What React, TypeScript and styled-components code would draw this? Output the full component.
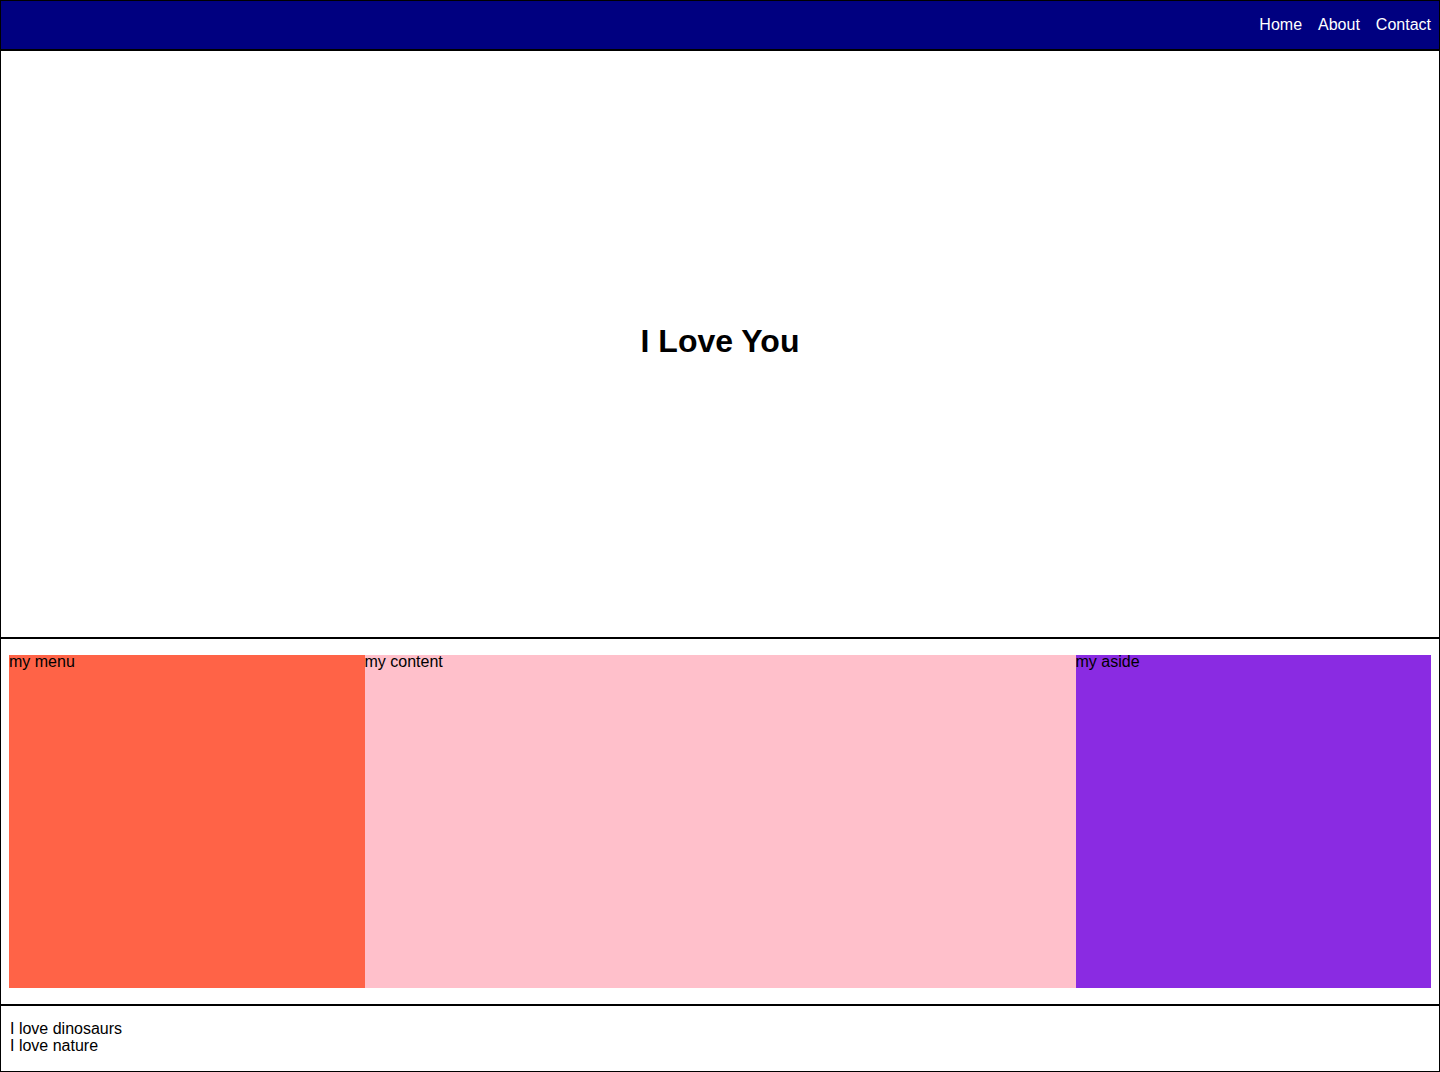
import React from "react";
import styled, { createGlobalStyle } from "styled-components";

const Global = createGlobalStyle`
  html, body {
    margin: 0;
    padding: 0;
    background: #ffffff;
  }
  body {
    font-family: "Liberation Sans", Arial, Helvetica, sans-serif;
    font-size: 16px;
    color: #000000;
  }
  * { box-sizing: border-box; }
`;

const Page = styled.div`
  width: 1440px;
  height: 1072px;
  display: grid;
  grid-template-rows: 50px 588px 367px 1fr;
`;

const Header = styled.header`
  background: #000080;
  border: 1px solid #000000;
  display: flex;
  align-items: center;
  justify-content: flex-end;
  padding: 0 8px 0 0;
`;

const Nav = styled.nav`
  display: flex;
  gap: 16px;
`;

const NavLink = styled.a`
  color: #ffffff;
  text-decoration: none;
  font-size: 16px;
  line-height: 18px;
`;

const Hero = styled.section`
  border: 1px solid #000000;
  display: flex;
  align-items: center;
  justify-content: center;
  padding-bottom: 6px;
`;

const Title = styled.h1`
  margin: 0;
  font-size: 32px;
  font-weight: bold;
`;

const Main = styled.main`
  border: 1px solid #000000;
  padding: 16px 8px;
  display: grid;
  grid-template-columns: 1fr 2fr 1fr;
`;

const Panel = styled.div<{ $bg: string }>`
  background: ${(p) => p.$bg};
  line-height: 14px;
`;

const Footer = styled.footer`
  border: 1px solid #000000;
  padding: 14px 9px 0;
  line-height: 17px;
`;

export default function App() {
  return (
    <>
      <Global />
      <Page>
        <Header>
          <Nav>
            <NavLink href="#">Home</NavLink>
            <NavLink href="#">About</NavLink>
            <NavLink href="#">Contact</NavLink>
          </Nav>
        </Header>
        <Hero>
          <Title>I Love You</Title>
        </Hero>
        <Main>
          <Panel $bg="#ff6347">my menu</Panel>
          <Panel $bg="#ffc0cb">my content</Panel>
          <Panel $bg="#8a2be2">my aside</Panel>
        </Main>
        <Footer>
          <div>I love dinosaurs</div>
          <div>I love nature</div>
        </Footer>
      </Page>
    </>
  );
}
